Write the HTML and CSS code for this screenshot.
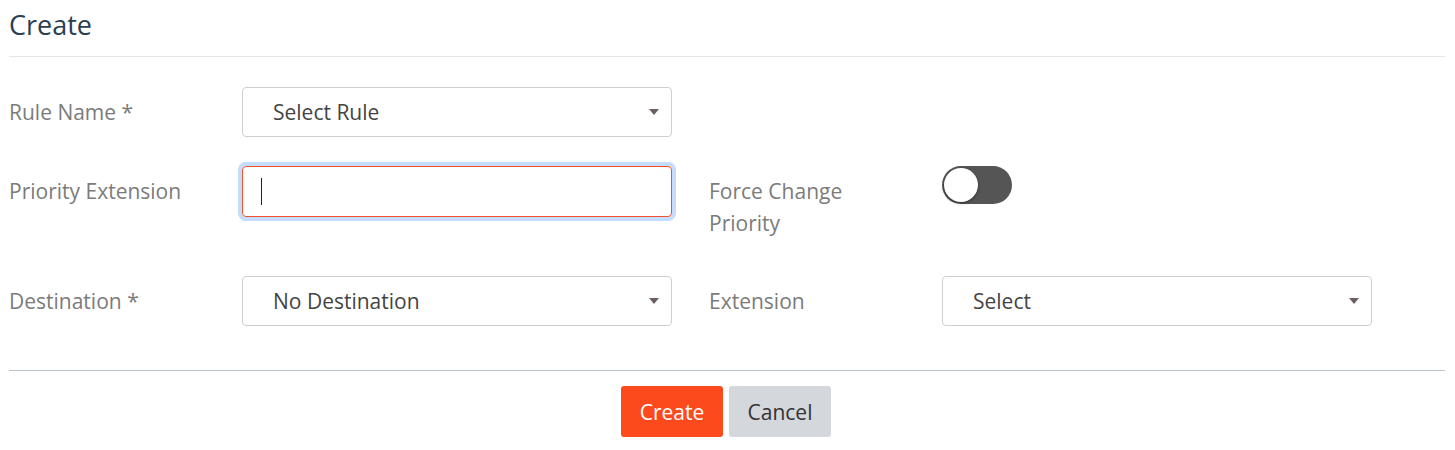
FILE: index.html
```html
<!DOCTYPE html>
<html>
<head>
<meta charset="utf-8">
<link rel="stylesheet" href="styles.css">
</head>
<body>
<div class="page">
  <h1 class="title">Create</h1>
  <form class="form">
    <div class="row">
      <div class="field">
        <label class="label">Rule Name *</label>
        <div class="select"><span>Select Rule</span><i class="caret"></i></div>
      </div>
    </div>
    <div class="row row-2">
      <div class="field">
        <label class="label">Priority Extension</label>
        <div class="input focus"><span class="cursor"></span></div>
      </div>
      <div class="field">
        <label class="label wrap">Force Change Priority</label>
        <div class="toggle"><span class="knob"></span></div>
      </div>
    </div>
    <div class="row row-3">
      <div class="field">
        <label class="label">Destination *</label>
        <div class="select"><span>No Destination</span><i class="caret"></i></div>
      </div>
      <div class="field">
        <label class="label">Extension</label>
        <div class="select"><span>Select</span><i class="caret"></i></div>
      </div>
    </div>
  </form>
  <div class="footer">
    <button class="btn primary" type="button">Create</button>
    <button class="btn secondary" type="button">Cancel</button>
  </div>
</div>
</body>
</html>
```
FILE: styles.css
```css
* { box-sizing: border-box; }
html, body { margin: 0; padding: 0; background: #fff; }
body { font-family: "Open Sans", "Noto Sans", sans-serif; }
.page { padding: 0 10px 0 9px; }
.title {
  margin: 0;
  padding-top: 7px;
  height: 57px;
  font-size: 27px;
  font-weight: 400;
  line-height: 36px;
  color: #2c3e50;
  border-bottom: 1px solid #e6e6e6;
}
.form { padding-top: 30px; }
.row { display: flex; gap: 37px; margin-bottom: 29px; }
.row-2 { margin-bottom: 37px; }
.row-3 { margin-bottom: 44px; }
.field { display: flex; width: 663px; }
.label {
  width: 233px;
  flex: none;
  font-size: 21px;
  color: #7b7b7b;
  line-height: 50px;
}
.label.wrap { line-height: 32px; padding-top: 9px; padding-right: 40px; }
.select, .input {
  width: 430px;
  height: 50px;
  border: 1px solid #cfcfcf;
  border-radius: 4px;
  display: flex;
  align-items: center;
  padding-left: 30px;
  font-size: 21px;
  color: #444;
  position: relative;
}
.caret {
  position: absolute;
  right: 12px;
  top: 21px;
  width: 0; height: 0;
  border-left: 5px solid transparent;
  border-right: 5px solid transparent;
  border-top: 6px solid #6b5f5f;
}
.input.focus {
  height: 51px;
  border-color: #f0512b;
  box-shadow: 0 0 0 4px #c4dcfd;
  padding-left: 18px;
}
.cursor { width: 1px; height: 27px; background: #222; }
.toggle {
  width: 70px;
  height: 38px;
  border-radius: 19px;
  background: #555;
  position: relative;
}
.knob {
  position: absolute;
  left: 2px; top: 2px;
  width: 34px; height: 34px;
  border-radius: 50%;
  background: #fff;
  box-shadow: 0 1px 3px rgba(0,0,0,.5);
}
.footer {
  border-top: 1px solid #b5c2cb;
  padding-top: 15px;
  padding-right: 2px;
  display: flex;
  justify-content: center;
  gap: 6px;
}
.btn {
  width: 102px;
  height: 51px;
  border: 0;
  border-radius: 3px;
  font-family: "Open Sans", "Noto Sans", sans-serif;
  font-size: 21px;
  cursor: pointer;
}
.primary { background: #fd4a1c; color: #fff; }
.secondary { background: #d4d7dc; color: #333; }
```
